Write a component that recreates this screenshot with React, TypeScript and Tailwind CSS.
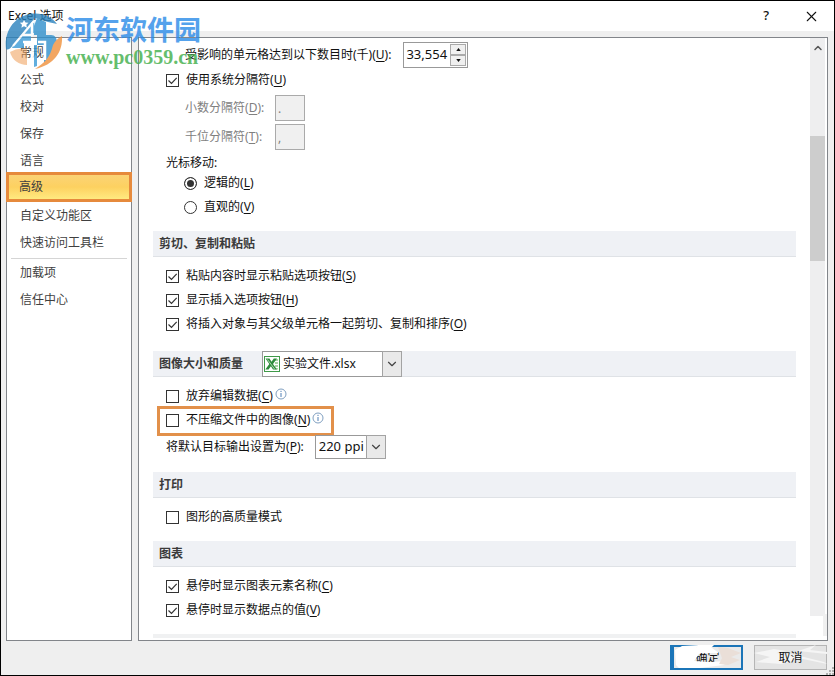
import { useState } from 'react';
import type { ReactNode } from 'react';
import { ChevronDown, ChevronUp, X } from 'lucide-react';

type OptionProps = {
  label: string;
  hotkey?: string;
  checked?: boolean;
  info?: boolean;
  highlight?: boolean;
};

const NAV_TOP = ['常规', '公式', '校对', '保存', '语言', '高级', '自定义功能区', '快速访问工具栏'];
const NAV_BOTTOM = ['加载项', '信任中心'];

// ================= SMALL PARTS =================
function Hotkey({ k }: { k: string }) {
  return (
    <>
      (<span className="underline underline-offset-2">{k}</span>)
    </>
  );
}

function InfoIcon() {
  return (
    <svg viewBox="0 0 12 12" className="mb-1 ml-0.5 size-3" fill="none">
      <circle cx="6" cy="6" r="5" stroke="#7f9fc0" strokeWidth="1" />
      <path d="M6 5v4M6 2.8v1.2" stroke="#4f7fb5" strokeWidth="1" />
    </svg>
  );
}

function Option({ label, hotkey, checked = false, info, highlight }: OptionProps) {
  const [on, setOn] = useState(checked);
  return (
    <div className="relative flex h-6 items-center pl-[13px]">
      <label className="flex items-center">
        <span className="mr-[7px] grid size-[13px]">
          <input
            type="checkbox"
            checked={on}
            onChange={(e) => setOn(e.target.checked)}
            className="col-start-1 row-start-1 size-[13px] appearance-none border border-[#333] bg-white"
          />
          {on && (
            <svg viewBox="0 0 13 13" className="pointer-events-none col-start-1 row-start-1" fill="none">
              <path d="M2.5 6.5l3 3 5.2-5.6" stroke="#333" strokeWidth="1.2" />
            </svg>
          )}
        </span>
        <span>
          {label}
          {hotkey && <Hotkey k={hotkey} />}
        </span>
      </label>
      {info && <InfoIcon />}
      {highlight && (
        <span className="pointer-events-none absolute -top-0.5 left-1 h-[30px] w-[177px] border-3 border-[#e2904a]" />
      )}
    </div>
  );
}

function Radio({ label, hotkey, defaultChecked }: { label: string; hotkey: string; defaultChecked?: boolean }) {
  return (
    <label className="flex h-6 items-center pl-[31px]">
      <input
        type="radio"
        name="cursor"
        defaultChecked={defaultChecked}
        className="mr-[7px] size-[13px] appearance-none rounded-full border border-[#333] bg-white checked:bg-[#333] checked:shadow-[inset_0_0_0_2px_#fff]"
      />
      <span>
        {label}
        <Hotkey k={hotkey} />
      </span>
    </label>
  );
}

function SectionHeader({ title, children }: { title: string; children?: ReactNode }) {
  return (
    <div className="mb-[7px] flex h-[26px] items-center border-b border-[#dfe2e6] bg-[#eff1f5] pl-1.5">
      <h2 className="font-bold text-[#3b3b3b]">{title}</h2>
      {children}
    </div>
  );
}

function SelectArrow() {
  return (
    <span className="pointer-events-none absolute inset-y-0 right-0 flex w-5 items-center justify-center border border-[#a3a3a3] bg-[#e9e9e9]">
      <ChevronDown className="size-3.5 text-[#444]" strokeWidth={2} />
    </span>
  );
}

function ExcelIcon() {
  return (
    <svg viewBox="0 0 16 16" className="pointer-events-none absolute left-0.5 size-4">
      <rect x="0.5" y="0.5" width="15" height="15" fill="#fff" stroke="#3f9a49" />
      <path d="M11 3h3v2h-3zM11 6h3v2h-3zM11 9h3v2h-3zM11 12h3v1.500h-3z" fill="#a7d3a4" />
      <path d="M1.500 2.500h4l2 3.300 2.300-3.300h3.200L9 7.900l4 5.600H9L6.900 10.300 4.600 13.500H1.300l4-5.400z" fill="#2e8b3c" />
      <path d="M3.500 3.500L10.500 13" stroke="#c9e8c6" strokeWidth="0.800" />
    </svg>
  );
}

function NavItem({ text, active, onClick }: { text: string; active: boolean; onClick: () => void }) {
  if (active) {
    return (
      <button
        onClick={onClick}
        className="-mx-px -mt-0.5 h-[30px] border-3 border-[#e68a3c] bg-linear-to-b from-[#fbd375] via-[#fdd160] to-[#ffea80] pl-2.5 text-left"
      >
        {text}
      </button>
    );
  }
  return (
    <button onClick={onClick} className="h-[27px] pl-[13px] text-left">
      {text}
    </button>
  );
}

// ================= SITE STAMP =================
function Stamp() {
  return (
    <div className="pointer-events-none absolute top-2 left-0 flex opacity-80">
      <svg viewBox="0 0 65 62" className="h-[62px] w-[65px]">
        <path d="M5 40C3 22 13 8 29 5c12-2 22 3 27 10l-9-2L34 9 12 36c-2 2-4 6-7 4z" fill="#2a82bd" />
        <path d="M33 11L14 33l-3 6h12v-7h7v-8h4z" fill="#3a9ad6" />
        <path d="M36 9l9 4v13h5c4 0 6 3 6 8-1 9-6 16-13 20V36h-7V26h-3v-9z" fill="#2f8fcc" />
        <path d="M31 15v11h-9M22 33h10v22M37 33h7v18" fill="none" stroke="#fff" strokeWidth="2.500" />
        <path d="M12 37L33 12" stroke="#fff" strokeWidth="2" />
        <path d="M33 36h3v21l-3 1z" fill="#3a9ad6" />
        <path d="M9 43c5-3 10-4 17-3v16C18 56 11 51 9 43z" fill="#f0a05a" fillOpacity="0.7" />
        <path d="M61 27c1 16-8 29-27 33 9-6 15-11 18-24 2-4 5-7 9-9z" fill="#f0913c" />
        <path d="M23 11l1.500 2.500 3 .3-2.200 2 .7 3-3-1.600-2.600 1.600.6-3-2.200-2 3-.3z" fill="#fff" />
      </svg>
      <div className="flex flex-col pt-1">
        <span className="font-['Noto_Sans_CJK_SC',sans-serif] text-[27px] leading-8 font-bold text-[#2a8be8]">河东软件园</span>
        <span className="font-['Liberation_Serif',serif] text-xl leading-6 font-bold text-[#3fae49]">www.pc0359.cn</span>
      </div>
    </div>
  );
}

export default function App() {
  const [page, setPage] = useState('高级');
  const [limit, setLimit] = useState(33554);

  return (
    <div className="relative flex h-screen min-h-[600px] flex-col overflow-hidden border border-black bg-[#efefef] font-['Noto_Sans','Noto_Sans_CJK_SC',sans-serif] text-xs text-[#111]">
      {/* ================= TITLE BAR ================= */}
      <header className="flex h-[30px] shrink-0 items-center bg-white pr-3.5 pl-[7px]">
        <h1 className="flex-1">Excel 选项</h1>
        <button aria-label="帮助" className="mr-[34px] text-[13px] font-medium">
          ?
        </button>
        <button aria-label="关闭">
          <X className="size-[17px]" strokeWidth={1.5} />
        </button>
      </header>

      <div className="flex min-h-0 flex-1 gap-1.5 px-[5px] pt-1.5 pr-1.5">
        {/* ================= SIDEBAR ================= */}
        <nav className="flex w-[126px] shrink-0 flex-col border border-[#82858a] bg-white pt-px text-[#3f3f3f]">
          {NAV_TOP.map((t) => (
            <NavItem key={t} text={t} active={page === t} onClick={() => setPage(t)} />
          ))}
          <hr className="mx-1 mt-0.5 border-[#d5d5d5]" />
          {NAV_BOTTOM.map((t) => (
            <NavItem key={t} text={t} active={page === t} onClick={() => setPage(t)} />
          ))}
        </nav>

        {/* ================= OPTIONS ================= */}
        <main className="relative flex min-w-0 flex-1 overflow-hidden border border-[#82858a] bg-white pl-3.5">
          <div className="min-w-0 flex-1 pt-1">
            <div className="flex h-[26px] items-center pl-8">
              <label htmlFor="limit">
                受影响的单元格达到以下数目时(千)
                <Hotkey k="U" />:
              </label>
              <div className="ml-3 flex h-[26px] w-[65px] items-center border border-[#999] bg-white pr-px">
                <input
                  id="limit"
                  value={limit.toLocaleString('en-US')}
                  onChange={(e) => setLimit(Number(e.target.value.replace(/\D/g, '')))}
                  className="w-0 flex-1 pl-0.5 text-[13px] outline-none"
                />
                <div className="flex h-[22px] w-4 flex-col">
                  <button
                    aria-label="增加"
                    onClick={() => setLimit(limit + 1)}
                    className="flex flex-1 items-center justify-center border border-[#aaa] bg-[#f0f0f0]"
                  >
                    <svg viewBox="0 0 6 4" className="h-[3px] w-[5px]">
                      <path d="M0 4l3-4 3 4z" fill="#111" />
                    </svg>
                  </button>
                  <button
                    aria-label="减少"
                    onClick={() => setLimit(limit - 1)}
                    className="flex flex-1 items-center justify-center border border-[#aaa] bg-[#f0f0f0]"
                  >
                    <svg viewBox="0 0 6 4" className="h-[3px] w-[5px]">
                      <path d="M0 0l3 4 3-4z" fill="#111" />
                    </svg>
                  </button>
                </div>
              </div>
            </div>
            <Option label="使用系统分隔符" hotkey="U" checked />
            <div className="mt-[3px] flex h-[26px] items-center pl-8 text-[#808080]">
              <label htmlFor="decimal" className="w-[90px]">
                小数分隔符
                <Hotkey k="D" />:
              </label>
              <input id="decimal" disabled value="." className="h-[26px] w-[30px] border border-[#aaa] bg-[#f0f0f0] pl-0.5" />
            </div>
            <div className="mt-[3px] flex h-[26px] items-center pl-8 text-[#808080]">
              <label htmlFor="thousand" className="w-[90px]">
                千位分隔符
                <Hotkey k="T" />:
              </label>
              <input id="thousand" disabled value="," className="h-[26px] w-[30px] border border-[#aaa] bg-[#f0f0f0] pl-0.5" />
            </div>
            <div role="radiogroup" aria-labelledby="cursor-label">
              <p id="cursor-label" className="pt-1 pl-[13px] leading-[17px]">
                光标移动:
              </p>
              <Radio label="逻辑的" hotkey="L" defaultChecked />
              <Radio label="直观的" hotkey="V" />
            </div>

            <section className="mt-3">
              <SectionHeader title="剪切、复制和粘贴" />
              <Option label="粘贴内容时显示粘贴选项按钮" hotkey="S" checked />
              <Option label="显示插入选项按钮" hotkey="H" checked />
              <Option label="将插入对象与其父级单元格一起剪切、复制和排序" hotkey="O" checked />
            </section>

            <section className="mt-[15px]">
              <SectionHeader title="图像大小和质量">
                <div className="relative ml-[19px] flex h-[26px] w-[140px] items-center">
                  <select aria-label="图像大小和质量" className="h-full w-full appearance-none border border-[#999] bg-white pl-5">
                    <option>实验文件.xlsx</option>
                  </select>
                  <ExcelIcon />
                  <SelectArrow />
                </div>
              </SectionHeader>
              <Option label="放弃编辑数据" hotkey="C" info />
              <Option label="不压缩文件中的图像" hotkey="N" info highlight />
              <div className="mt-[3px] flex h-6 items-center pl-[13px]">
                <label htmlFor="ppi">
                  将默认目标输出设置为
                  <Hotkey k="P" />:
                </label>
                <div className="relative ml-[11px] h-6 w-[71px]">
                  <select id="ppi" className="h-full w-full appearance-none border border-[#999] bg-white pl-[3px] text-[13px]">
                    <option>220 ppi</option>
                    <option>150 ppi</option>
                    <option>96 ppi</option>
                  </select>
                  <SelectArrow />
                </div>
              </div>
            </section>

            <section className="mt-[13px]">
              <SectionHeader title="打印" />
              <Option label="图形的高质量模式" />
            </section>

            <section className="mt-3">
              <SectionHeader title="图表" />
              <Option label="悬停时显示图表元素名称" hotkey="C" checked />
              <Option label="悬停时显示数据点的值" hotkey="V" checked />
            </section>

            {/* next group, just peeking in above the fold */}
            <div className="mt-3 h-1 bg-[#f0f1f2]" />
          </div>

          {/* ================= SCROLLBAR ================= */}
          <div className="mr-0.5 mb-6 ml-3.5 flex w-[15px] shrink-0 flex-col items-center bg-[#eeeeef]">
            <ChevronUp className="mt-1 size-3 text-[#555]" strokeWidth={3} />
            <div className="mt-[82px] h-[125px] w-full bg-[#cdcdcd]" />
          </div>
          <div className="absolute right-0 bottom-1 h-[22px] w-1 bg-[#f0f0f0]" />
        </main>
      </div>

      {/* ================= FOOTER ================= */}
      <footer className="flex shrink-0 justify-end gap-[11px] pt-1 pr-[7px] pb-[5px]">
        <button className="relative h-[25px] w-[73px] border-2 border-l-4 border-[#1b75b8] bg-[#eaeaea]">
          确定
          <svg viewBox="0 0 73 25" className="pointer-events-none absolute -top-0.5 -left-1 h-[25px] w-[73px]">
            <path d="M5 5L12 1l18-1-4 3h16l7 5H30l-6 8 14 1 20-1-4 4-24 3H9l-3-3z" fill="#fff" />
            <path d="M48 2l10 1 13 5-10 4 9 3-12 5-9-1 3-6z" fill="#eadfd8" />
            <path d="M28 0h16l-3 3H26z" fill="#fff" />
          </svg>
        </button>
        <button className="relative h-[25px] w-[73px] border border-[#b5b5b5] bg-[#e4e4e4]">
          <svg viewBox="0 0 73 25" className="pointer-events-none absolute -top-px -left-px h-[25px] w-[73px]">
            <path d="M0 8l20-4 12 2-10 2 20 2 28 7 3 2-24-5-22 5-25-2 14-5zM44 6L62 0l-6 5 17 2v2z" fill="#f5f5f5" />
          </svg>
          <span className="relative">取消</span>
        </button>
      </footer>

      {/* resize grip */}
      <svg viewBox="0 0 8 8" className="absolute right-0 bottom-0 size-2" fill="#b0b0b0">
        <path d="M6 0h2v2H6zM3 3h2v2H3zM6 3h2v2H6zM0 6h2v2H0zM3 6h2v2H3zM6 6h2v2H6z" />
      </svg>

      <Stamp />
    </div>
  );
}
